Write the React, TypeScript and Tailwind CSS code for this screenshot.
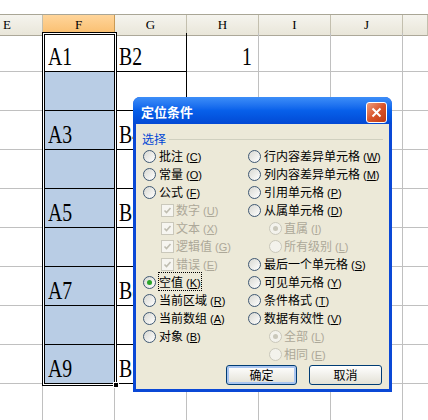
import React from "react";

const cols = ["E", "F", "G", "H", "I", "J", ""];

type Opt = {
  label: string;
  hk: string;
  kind?: "radio" | "check";
  indent?: boolean;
  disabled?: boolean;
  checked?: boolean;
  focus?: boolean;
};

const leftOpts: Opt[] = [
  { label: "批注", hk: "C" },
  { label: "常量", hk: "O" },
  { label: "公式", hk: "F" },
  { label: "数字", hk: "U", kind: "check", indent: true, disabled: true, checked: true },
  { label: "文本", hk: "X", kind: "check", indent: true, disabled: true, checked: true },
  { label: "逻辑值", hk: "G", kind: "check", indent: true, disabled: true, checked: true },
  { label: "错误", hk: "E", kind: "check", indent: true, disabled: true, checked: true },
  { label: "空值", hk: "K", checked: true, focus: true },
  { label: "当前区域", hk: "R" },
  { label: "当前数组", hk: "A" },
  { label: "对象", hk: "B" },
];

const rightOpts: Opt[] = [
  { label: "行内容差异单元格", hk: "W" },
  { label: "列内容差异单元格", hk: "M" },
  { label: "引用单元格", hk: "P" },
  { label: "从属单元格", hk: "D" },
  { label: "直属", hk: "I", indent: true, disabled: true, checked: true },
  { label: "所有级别", hk: "L", indent: true, disabled: true },
  { label: "最后一个单元格", hk: "S" },
  { label: "可见单元格", hk: "Y" },
  { label: "条件格式", hk: "T" },
  { label: "数据有效性", hk: "V" },
  { label: "全部", hk: "L", indent: true, disabled: true, checked: true },
  { label: "相同", hk: "E", indent: true, disabled: true },
];

function Radio({ checked, disabled }: { checked?: boolean; disabled?: boolean }) {
  return (
    <span
      className={
        "flex h-[13px] w-[13px] shrink-0 items-center justify-center rounded-full border " +
        (disabled
          ? "border-[#cac8bb] bg-[#f3f2ec]"
          : "border-[#3f5873] bg-linear-to-br from-[#d8d8d2] to-white")
      }
    >
      {checked && (
        <span
          className={
            "h-[5px] w-[5px] rounded-full " + (disabled ? "bg-[#cac8bb]" : "bg-[#2aa52a]")
          }
        />
      )}
    </span>
  );
}

function Check({ checked }: { checked?: boolean }) {
  return (
    <span className="flex h-[13px] w-[13px] shrink-0 items-center justify-center border border-[#cac8bb] bg-[#f6f5f0]">
      {checked && (
        <svg width="9" height="9" viewBox="0 0 9 9">
          <path d="M1.5 4.5 L3.5 6.5 L7.5 2" fill="none" stroke="#bfbdb0" strokeWidth="1.6" />
        </svg>
      )}
    </span>
  );
}

function Option({ o, right }: { o: Opt; right?: boolean }) {
  const text = (
    <span className={o.disabled ? "text-[#aca899]" : "text-black"}>
      {o.label}
      <span className="ml-[3px] font-['Liberation_Sans',sans-serif] text-[11px]">
        (<span className="underline">{o.hk}</span>)
      </span>
    </span>
  );
  return (
    <div
      className={
        "flex h-[18px] items-center " +
        (o.indent ? (right ? "pl-[21px]" : "pl-[18px]") : "")
      }
    >
      {o.kind === "check" ? <Check checked={o.checked} /> : <Radio checked={o.checked} disabled={o.disabled} />}
      <span className={o.indent ? "ml-[2px]" : "ml-[3px]"}>
        {o.focus ? (
          <span className="outline-1 outline-dotted outline-black">{text}</span>
        ) : (
          text
        )}
      </span>
    </div>
  );
}

function Dialog() {
  return (
    <div className="absolute left-[133px] top-[97px] flex h-[295px] w-[259px] flex-col rounded-t-[7px] bg-[#0a48d6] font-['Noto_Sans_CJK_SC',sans-serif] text-[12px]">
      <div className="flex h-[27px] items-start justify-between rounded-t-[7px] bg-linear-to-b from-[#3d8ef8] via-[#0860ea] to-[#0349d4] pl-[8px] pr-[5px] pt-[5px]">
        <span className="text-[13px] font-bold leading-[19px] text-white">定位条件</span>
        <span className="flex h-[21px] w-[21px] items-center justify-center rounded-[3px] border border-white bg-linear-to-br from-[#ec9b7c] via-[#d9542a] to-[#bd3a12]">
          <svg width="11" height="11" viewBox="0 0 11 11">
            <path d="M1.5 1.5 L9.5 9.5 M9.5 1.5 L1.5 9.5" stroke="white" strokeWidth="2" />
          </svg>
        </span>
      </div>
      <div className="mx-[3px] mb-[3px] flex flex-1 flex-col bg-[#ece9d8] pt-[7px]">
        <div className="flex h-[16px] items-center pl-[6px]">
          <span className="text-[#0046d5]">选择</span>
          <span className="ml-[3px] mr-[6px] h-px flex-1 bg-[#d0d0bf]" />
        </div>
        <div className="flex pl-[7px]">
          <div className="flex w-[105px] flex-col">
            {leftOpts.map((o, i) => (
              <Option key={i} o={o} />
            ))}
          </div>
          <div className="flex flex-col">
            {rightOpts.map((o, i) => (
              <Option key={i} o={o} right />
            ))}
          </div>
        </div>
        <div className="mt-[2px] flex justify-end gap-[12px] pr-[7px]">
          <button className="h-[20px] w-[71px] rounded-[3px] border border-[#003c74] bg-linear-to-b from-white to-[#e3e1d6] p-0 leading-[16px] shadow-[inset_0_0_0_2px_#a9c5f0]">
            确定
          </button>
          <button className="h-[20px] w-[73px] rounded-[3px] border border-[#003c74] bg-linear-to-b from-white to-[#e3e1d6] p-0 leading-[18px]">
            取消
          </button>
        </div>
      </div>
    </div>
  );
}

const fText: Record<number, string> = { 1: "A1", 3: "A3", 5: "A5", 7: "A7", 9: "A9" };
const gText: Record<number, string> = { 1: "B2", 3: "B4", 5: "B6", 7: "B8", 9: "B10" };

function CellText({ children }: { children: React.ReactNode }) {
  return (
    <span className="inline-block origin-left scale-x-[0.76] font-['Liberation_Serif',serif] text-[26px] leading-[25px] text-black">
      {children}
    </span>
  );
}

export default function App() {
  const rows = Array.from({ length: 10 }, (_, i) => i + 1);
  return (
    <div className="relative h-[420px] w-[428px] overflow-hidden bg-white">
      <div className="h-[14px]" />
      <div className="grid h-[19px] grid-cols-[43px_72px_72px_72px_72px_72px_1fr] border-t border-[#a9a696] font-['Liberation_Serif',serif] text-[13px]">
        {cols.map((c, i) => (
          <div
            key={i}
            className={
              "flex items-center border-r " +
              (c === "F"
                ? "justify-center border-b border-b-[#5a4a30] border-r-[#c99a55] bg-linear-to-b from-[#ffd59a] to-[#f9bd6c] "
                : "border-b border-b-[#aca899] border-r-[#c3bfae] bg-linear-to-b from-[#f5f4ee] to-[#e9e6d9] ") +
              (c === "E" ? "justify-start pl-[3px]" : "justify-center")
            }
          >
            {c}
          </div>
        ))}
      </div>
      {rows.map((r) => {
        const inData = r <= 9;
        return (
          <div key={r} className="grid h-[39px] grid-cols-[43px_72px_72px_72px_72px_72px_1fr]">
            <div
              className={
                "border-b border-r border-b-[#c0c0c0] " +
                (inData ? "border-r-black" : "border-r-[#c0c0c0]")
              }
            />
            <div
              className={
                "flex items-end pb-[2px] pl-[5px] " +
                (inData ? "border-b border-r border-black " : "border-b border-r border-[#c0c0c0] ") +
                (r >= 2 && r <= 9 ? "bg-[#b9cde5]" : "bg-white")
              }
            >
              {fText[r] && <CellText>{fText[r]}</CellText>}
            </div>
            <div
              className={
                "flex items-end pb-[2px] pl-[4px] " +
                (inData ? "border-b border-r border-black" : "border-b border-r border-[#c0c0c0]")
              }
            >
              {gText[r] && <CellText>{gText[r]}</CellText>}
            </div>
            <div className="flex items-end justify-end border-b border-r border-[#c0c0c0] pb-[2px] pr-[6px]">
              {r === 1 && (
                <span className="inline-block origin-right scale-x-[0.76] font-['Liberation_Serif',serif] text-[26px] leading-[25px] text-black">
                  1
                </span>
              )}
            </div>
            <div className="border-b border-r border-[#c0c0c0]" />
            <div className="border-b border-r border-[#c0c0c0]" />
            <div className="border-b border-[#c0c0c0]" />
          </div>
        );
      })}
      {/* selection outline F1:F9 */}
      <div className="pointer-events-none absolute left-[42px] top-[32px] h-[354px] w-[75px] border border-black">
        <div className="h-full w-full border border-white">
          <div className="h-full w-full border border-black" />
        </div>
      </div>
      <div className="absolute left-[113px] top-[382px] h-[6px] w-[6px] border border-white bg-black" />
      <Dialog />
    </div>
  );
}
